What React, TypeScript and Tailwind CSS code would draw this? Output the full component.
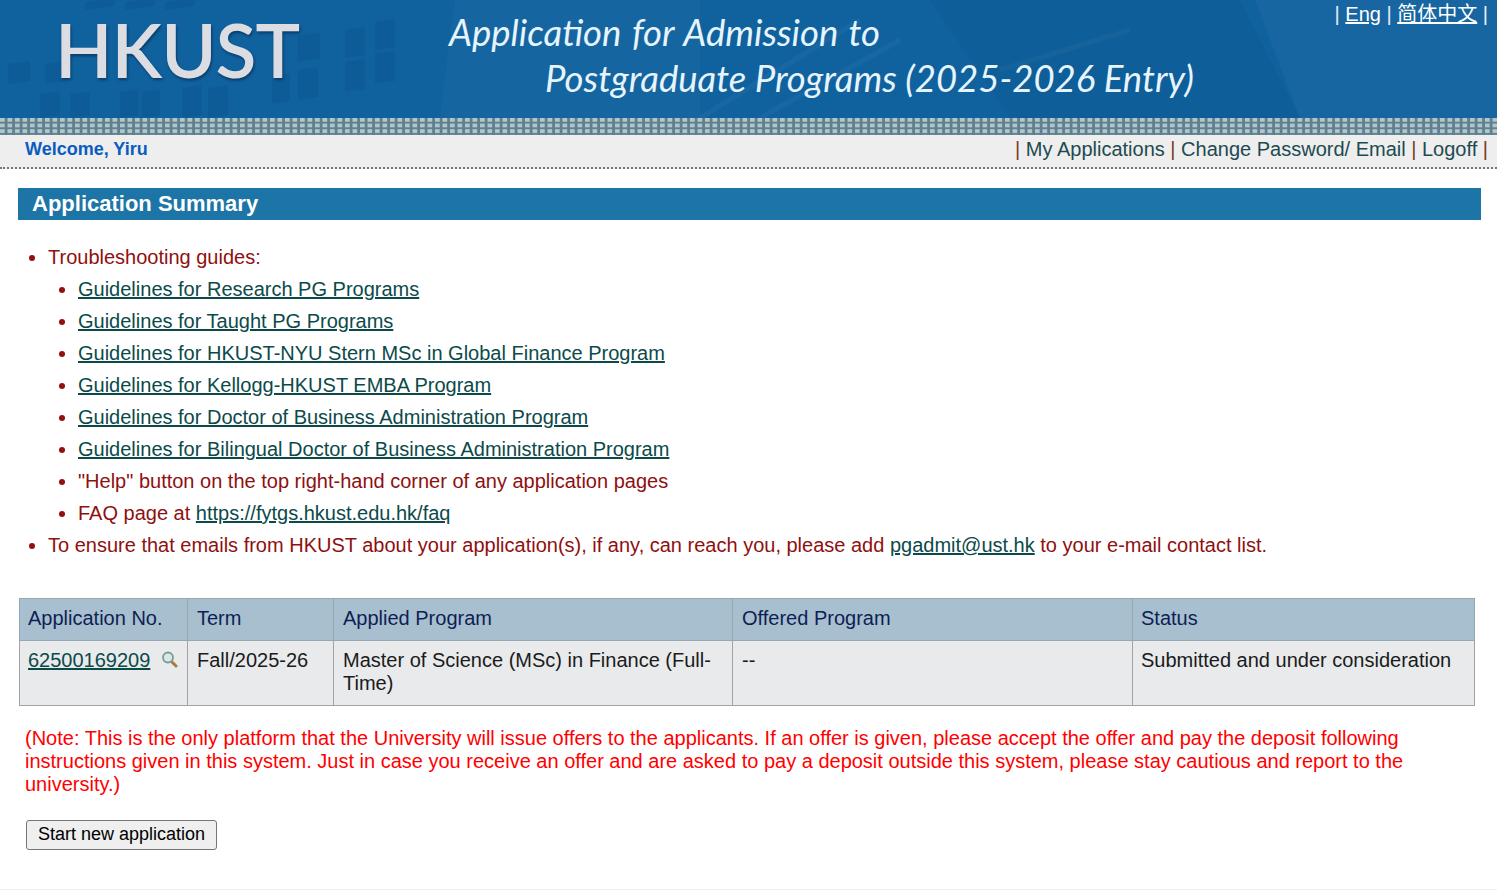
const guides = [
  "Guidelines for Research PG Programs",
  "Guidelines for Taught PG Programs",
  "Guidelines for HKUST-NYU Stern MSc in Global Finance Program",
  "Guidelines for Kellogg-HKUST EMBA Program",
  "Guidelines for Doctor of Business Administration Program",
  "Guidelines for Bilingual Doctor of Business Administration Program",
]

const windows = [
  [345, 30, 20, 28], [375, 22, 20, 28], [345, 62, 20, 30], [375, 54, 20, 30], [298, 36, 22, 26], [298, 70, 20, 30], [272, 76, 18, 28],
  [40, 94, 20, 24], [70, 94, 20, 24], [120, 92, 18, 26], [142, 92, 18, 26], [182, 88, 20, 30], [208, 88, 20, 30], [8, 64, 22, 20], [45, 64, 20, 20],
  [85, 2, 30, 8], [125, 2, 30, 8], [165, 2, 30, 8],
]

function HeaderArt() {
  return (
    <svg className="absolute inset-0 w-full h-full" viewBox="0 0 1497 118" preserveAspectRatio="none" aria-hidden="true">
      {windows.map(([x, y, w, h], i) => (
        <rect key={i} x={x} y={y} width={w} height={h} fill="#0b4f86" opacity="0.28" transform={`skewY(-8) translate(0 ${x * 0.14})`} />
      ))}
      <path d="M455 0H700V118H440Z" fill="#ffffff" opacity="0.025" />
      <path d="M1255 0L1300 118H1497V0Z" fill="#ffffff" opacity="0.03" />
      <path d="M930 0L1010 118H1300L1240 0Z" fill="#003a70" opacity="0.1" />
      <path d="M700 118L860 20M760 118L900 40M1000 70L1130 30" stroke="#ffffff" strokeWidth="5" opacity="0.03" />
    </svg>
  )
}

function Magnifier() {
  return (
    <svg width="17" height="17" viewBox="0 0 17 17" aria-hidden="true">
      <path d="M10 10L15 15" stroke="#a67c3d" strokeWidth="3" strokeLinecap="round" />
      <circle cx="7" cy="6.5" r="5" fill="#d7e8e6" stroke="#7f9a94" strokeWidth="1.8" />
    </svg>
  )
}

export default function App() {
  return (
    <main className="min-h-[890px] bg-white font-['Liberation_Sans',Arial,sans-serif] text-[20px] border-b border-[#eeeeee]">
      <header className="relative h-[118px] overflow-hidden bg-[#10629f]">
        <HeaderArt />
        <div className="absolute left-[55px] top-[1px] font-['Lato',sans-serif] text-[75px] leading-[96px] font-semibold tracking-[-1px] text-[#dcdde2] [text-shadow:1px_2px_3px_#0a3a66]">
          HKUST
        </div>
        <div className="absolute left-[449px] top-[9px] font-['Lato',sans-serif] italic text-[36.5px] leading-[46px] text-[#e6f4fc]">
          <div className="[word-spacing:2px]">Application for Admission to</div>
          <div className="pl-[96px]">Postgraduate Programs (2025-2026 Entry)</div>
        </div>
        <div className="absolute right-[9px] top-[3px] leading-[23px] text-[#e8eef4]">
          | <a href="#" className="underline text-white">Eng</a> | <a href="#" className="underline text-white font-['Liberation_Sans','Noto_Sans_CJK_SC',sans-serif]">简体中文</a> |
        </div>
      </header>

      <div className="h-[17px] bg-[#5f8090] bg-[linear-gradient(90deg,#b0c6c8_0,#b0c6c8_5px,transparent_5px,transparent_7.5px)] bg-[length:7.5px_100%]">
        <div className="h-full bg-[linear-gradient(180deg,transparent_0,transparent_4px,#5f8090_4px,#5f8090_5.5px)] bg-[length:100%_5.6px]" />
      </div>

      <nav className="flex items-center justify-between h-[34px] pb-[3px] pl-[25px] pr-[9px] bg-[#eeeeee] border-b-2 border-dotted border-[#777777]">
        <span className="font-bold text-[18px] text-[#0b5cc0]">Welcome, Yiru</span>
        <span className="text-[#204a50] -mt-[2px]">
          <span className="text-[#7a3b22]">|</span> My Applications <span className="text-[#7a3b22]">|</span> Change Password/ Email <span className="text-[#7a3b22]">|</span> Logoff <span className="text-[#7a3b22]">|</span>
        </span>
      </nav>

      <section className="pl-[18px] pr-[16px] pt-[19px]">
        <h1 className="h-[32px] pl-[14px] bg-[#1d74a6] text-white font-bold text-[22px] leading-[31px]">
          Application Summary
        </h1>

        <ul className="mt-[21px] pl-[30px] list-disc text-[#8f1010] leading-[32px] marker:text-[#8f1010]">
          <li>
            Troubleshooting guides:
            <ul className="pl-[30px] list-disc">
              {guides.map((g) => (
                <li key={g}>
                  <a href="#" className="underline text-[#0c4a4a]">{g}</a>
                </li>
              ))}
              <li>"Help" button on the top right-hand corner of any application pages</li>
              <li>
                FAQ page at <a href="#" className="underline text-[#0c4a4a]">https://fytgs.hkust.edu.hk/faq</a>
              </li>
            </ul>
          </li>
          <li>
            To ensure that emails from HKUST about your application(s), if any, can reach you, please add{" "}
            <a href="#" className="underline text-[#0c4a4a]">pgadmit@ust.hk</a> to your e-mail contact list.
          </li>
        </ul>

        <table className="mt-[37px] ml-px w-[1455px] table-fixed border-collapse leading-[23px] text-[#1b1b1b]">
          <colgroup>
            <col className="w-[168px]" />
            <col className="w-[146px]" />
            <col className="w-[399px]" />
            <col className="w-[400px]" />
            <col className="w-[342px]" />
          </colgroup>
          <thead>
            <tr className="h-[42px] bg-[#a7bfce] text-left text-[#0f1f55]">
              <th className="border border-[#95a7b1] pl-[8px] pb-[2px] font-normal">Application No.</th>
              <th className="border border-[#95a7b1] pl-[9px] pb-[2px] font-normal">Term</th>
              <th className="border border-[#95a7b1] pl-[9px] pb-[2px] font-normal">Applied Program</th>
              <th className="border border-[#95a7b1] pl-[9px] pb-[2px] font-normal">Offered Program</th>
              <th className="border border-[#95a7b1] pl-[8px] pb-[2px] font-normal">Status</th>
            </tr>
          </thead>
          <tbody>
            <tr className="h-[65px] bg-[#e8eaec] align-top">
              <td className="border border-[#a3a3a3] pl-[8px] pt-[8px]">
                <div className="flex items-start gap-[11px]">
                  <a href="#" className="underline text-[#0c4a4a]">62500169209</a>
                  <span className="mt-[2px]"><Magnifier /></span>
                </div>
              </td>
              <td className="border border-[#a3a3a3] pl-[9px] pt-[8px]">Fall/2025-26</td>
              <td className="border border-[#a3a3a3] pl-[9px] pr-[16px] pt-[8px]">Master of Science (MSc) in Finance (Full-Time)</td>
              <td className="border border-[#a3a3a3] pl-[9px] pt-[8px]">--</td>
              <td className="border border-[#a3a3a3] pl-[8px] pt-[8px]">Submitted and under consideration</td>
            </tr>
          </tbody>
        </table>

        <p className="mt-[21px] ml-[7px] mr-[60px] leading-[23px] text-[#ff0000]">
          (Note: This is the only platform that the University will issue offers to the applicants. If an offer is given, please accept the offer and pay the deposit following instructions given in this system. Just in case you receive an offer and are asked to pay a deposit outside this system, please stay cautious and report to the university.)
        </p>

        <button className="mt-[24px] ml-[8px] h-[30px] w-[191px] rounded-[3px] border border-[#767676] bg-[#efefef] pb-[2px] text-[18px] leading-[20px] text-black">
          Start new application
        </button>
      </section>
    </main>
  )
}
